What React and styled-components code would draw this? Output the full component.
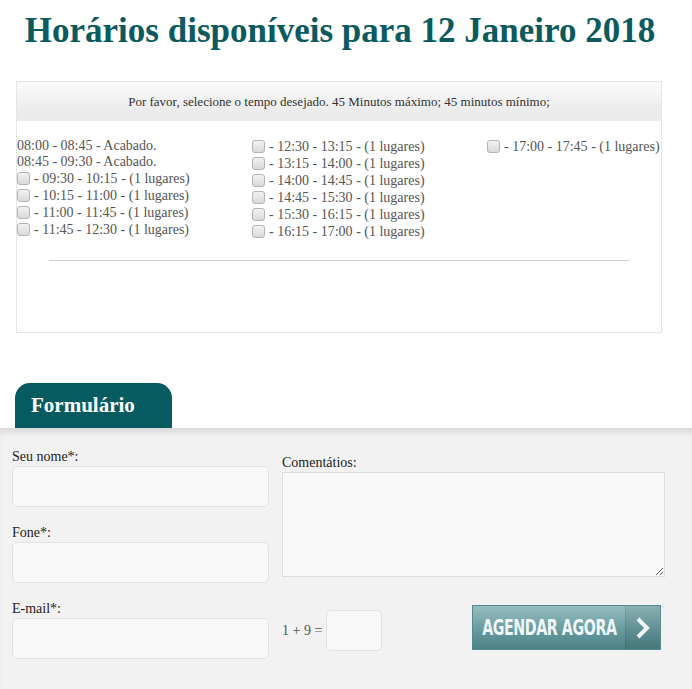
import styled, { createGlobalStyle } from "styled-components";

const GlobalStyle = createGlobalStyle`
  html, body {
    margin: 0;
    padding: 0;
    background: #ffffff;
    font-family: "Liberation Serif", "Times New Roman", serif;
  }
`;

const Page = styled.div`
  width: 692px;
  min-height: 689px;
  display: flex;
  flex-direction: column;
`;

const Title = styled.h1`
  margin: 11px 0 0;
  font-size: 35px;
  line-height: 40px;
  font-weight: bold;
  text-align: center;
  color: #0a5a60;
  padding-right: 12px;
`;

const Schedule = styled.div`
  margin: 30px 0 0 16px;
  width: 644px;
  height: 250px;
  border: 1px solid #e6e6e6;
  background: #ffffff;
`;

const Notice = styled.div`
  height: 39px;
  display: flex;
  align-items: center;
  justify-content: center;
  font-size: 13px;
  color: #333;
  background: linear-gradient(#fbfbfb, #ececec 70%, #ebebeb);
`;

const Columns = styled.div`
  display: grid;
  grid-template-columns: 235px 235px 174px;
  padding-top: 17px;
`;

const Column = styled.div`
  display: flex;
  flex-direction: column;
`;

const Slot = styled.label`
  display: flex;
  align-items: center;
  height: ${({ $free }) => ($free ? "17px" : "16px")};
  font-size: 14px;
  color: #555;
  white-space: nowrap;
`;

const Check = styled.input.attrs({ type: "checkbox" })`
  appearance: none;
  width: 13px;
  height: 13px;
  margin: 0 4px 0 0;
  border: 1px solid #b4b4b4;
  border-radius: 3px;
  background: linear-gradient(#f2f2f2, #d9d9d9);
  box-sizing: border-box;
`;

const Divider = styled.hr`
  margin: 20px 32px 0 32px;
  border: 0;
  border-top: 1px solid #cfcfcf;
  height: 0;
`;

const Tab = styled.div`
  margin: 50px 0 0 15px;
  width: 157px;
  height: 45px;
  box-sizing: border-box;
  padding-left: 16px;
  display: flex;
  align-items: center;
  border-radius: 15px 15px 0 0;
  background: #065b61;
  color: #ffffff;
  font-size: 21px;
  font-weight: bold;
`;

const FormArea = styled.div`
  flex: 1;
  display: grid;
  grid-template-columns: 257px 383px;
  column-gap: 13px;
  padding: 21px 0 28px 12px;
  background: #f2f2f2;
  box-shadow: inset 0 7px 8px -5px rgba(0, 0, 0, 0.16);
`;

const LeftCol = styled.div`
  display: flex;
  flex-direction: column;
  gap: 18px;
`;

const RightCol = styled.div`
  display: flex;
  flex-direction: column;
  padding-top: 6px;
`;

const Field = styled.div`
  display: flex;
  flex-direction: column;
  gap: 1px;
`;

const Label = styled.span`
  font-size: 14px;
  line-height: 16px;
  color: #222;
`;

const TextInput = styled.input`
  height: 41px;
  box-sizing: border-box;
  border: 1px solid #e2e2e2;
  border-radius: 5px;
  background: #f8f8f8;
  outline: none;
  width: ${({ $w }) => $w || "100%"};
`;

const Comments = styled.textarea`
  margin-top: 1px;
  height: 105px;
  box-sizing: border-box;
  border: 1px solid #dcdcdc;
  background: #f8f8f8;
  border-radius: 0;
  outline: none;
  resize: vertical;
  width: 100%;
`;

const SubmitRow = styled.div`
  display: flex;
  align-items: flex-start;
  justify-content: space-between;
  margin-top: 28px;
  padding-right: 4px;
`;

const Captcha = styled.div`
  display: flex;
  align-items: center;
  gap: 4px;
  margin-top: 5px;
  font-size: 14px;
  color: #555;
`;

const Button = styled.button`
  display: flex;
  width: 189px;
  height: 45px;
  padding: 0;
  box-sizing: border-box;
  border: 1px solid #558a8e;
  background: linear-gradient(#97bec1, #6c9ea2 50%, #4a8185);
  cursor: pointer;
`;

const ButtonText = styled.span`
  flex: 1;
  display: flex;
  align-items: center;
  justify-content: center;
  overflow: hidden;

  span {
    display: inline-block;
    font-family: "DejaVu Sans Condensed", "DejaVu Sans", sans-serif;
    font-stretch: condensed;
    font-weight: bold;
    font-size: 22px;
    letter-spacing: -0.6px;
    color: #eef6f7;
    transform: scale(0.72, 1);
    white-space: nowrap;
  }
`;

const Arrow = styled.span`
  width: 34px;
  display: flex;
  align-items: center;
  justify-content: center;
  border-left: 1px solid rgba(0, 0, 0, 0.08);
  background: rgba(0, 0, 0, 0.07);
`;

const left = [
  { t: "08:00 - 08:45 - Acabado." },
  { t: "08:45 - 09:30 - Acabado." },
  { t: "09:30 - 10:15", free: true },
  { t: "10:15 - 11:00", free: true },
  { t: "11:00 - 11:45", free: true },
  { t: "11:45 - 12:30", free: true },
];

const middle = ["12:30 - 13:15", "13:15 - 14:00", "14:00 - 14:45", "14:45 - 15:30", "15:30 - 16:15", "16:15 - 17:00"];

const SlotItem = ({ text, free }) =>
  free ? (
    <Slot $free>
      <Check />- {text} - (1 lugares)
    </Slot>
  ) : (
    <Slot>{text}</Slot>
  );

export default function App() {
  return (
    <Page>
      <GlobalStyle />
      <Title>Horários disponíveis para 12 Janeiro 2018</Title>
      <Schedule>
        <Notice>Por favor, selecione o tempo desejado. 45 Minutos máximo; 45 minutos mínimo;</Notice>
        <Columns>
          <Column>
            {left.map((s) => (
              <SlotItem key={s.t} text={s.t} free={s.free} />
            ))}
          </Column>
          <Column>
            {middle.map((t) => (
              <SlotItem key={t} text={t} free />
            ))}
          </Column>
          <Column>
            <SlotItem text="17:00 - 17:45" free />
          </Column>
        </Columns>
        <Divider />
      </Schedule>
      <Tab>Formulário</Tab>
      <FormArea>
        <LeftCol>
          <Field>
            <Label>Seu nome*:</Label>
            <TextInput />
          </Field>
          <Field>
            <Label>Fone*:</Label>
            <TextInput />
          </Field>
          <Field>
            <Label>E-mail*:</Label>
            <TextInput />
          </Field>
        </LeftCol>
        <RightCol>
          <Label>Comentátios:</Label>
          <Comments />
          <SubmitRow>
            <Captcha>
              1 + 9 = <TextInput $w="56px" />
            </Captcha>
            <Button>
              <ButtonText>
                <span>AGENDAR AGORA</span>
              </ButtonText>
              <Arrow>
                <svg width="16" height="22" viewBox="0 0 16 22">
                  <polyline points="3,2 12,11 3,20" fill="none" stroke="#eef6f6" strokeWidth="4" />
                </svg>
              </Arrow>
            </Button>
          </SubmitRow>
        </RightCol>
      </FormArea>
    </Page>
  );
}
